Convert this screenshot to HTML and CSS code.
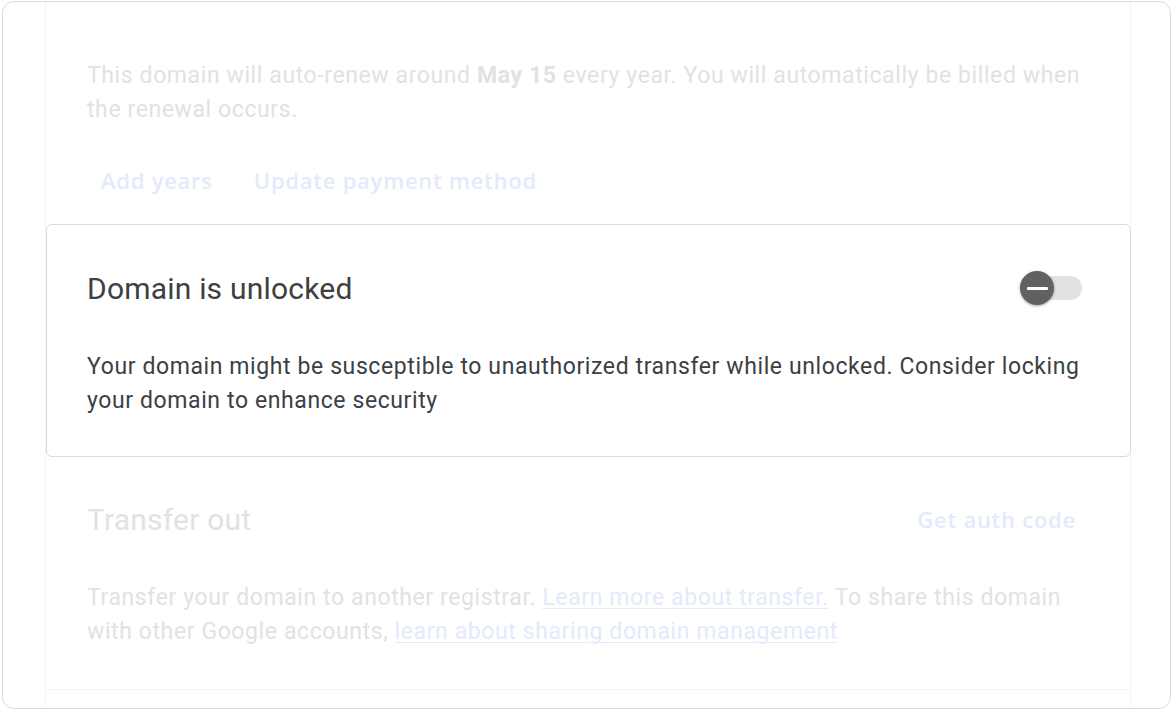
FILE: index.html
```html
<!DOCTYPE html>
<html lang="en">
<head>
<meta charset="utf-8">
<title>Domain settings</title>
<link rel="stylesheet" href="styles.css">
</head>
<body>
<div class="frame">
  <div class="column">
    <section class="renew">
      <p class="muted-text">This domain will auto-renew around <b>May 15</b> every year. You will automatically be billed when the renewal occurs.</p>
      <div class="actions">
        <span class="text-btn">Add years</span>
        <span class="text-btn">Update payment method</span>
      </div>
    </section>

    <section class="card">
      <div class="card-head">
        <h2 class="card-title">Domain is unlocked</h2>
        <div class="switch" role="switch" aria-checked="false">
          <span class="switch-track"></span>
          <span class="switch-knob"><span class="switch-minus"></span></span>
        </div>
      </div>
      <p class="card-text">Your domain might be susceptible to unauthorized transfer while unlocked. Consider locking your domain to enhance security</p>
    </section>

    <section class="transfer">
      <div class="transfer-head">
        <h2 class="muted-title">Transfer out</h2>
        <span class="text-btn">Get auth code</span>
      </div>
      <p class="muted-text">Transfer your domain to another registrar. <a class="muted-link" href="#">Learn more about transfer.</a> To share this domain with other Google accounts, <a class="muted-link" href="#">learn about sharing domain management</a></p>
    </section>
  </div>
</div>
</body>
</html>
```

FILE: styles.css
```css
* { box-sizing: border-box; }

html, body {
  margin: 0;
  padding: 0;
  background: #ffffff;
  font-family: Roboto, "Liberation Sans", Arial, sans-serif;
}

.frame {
  margin: 1px 3px 0 2px;
  height: 708px;
  border: 1px solid #d9d9d9;
  border-radius: 12px;
  overflow: hidden;
  background: #ffffff;
}

.column {
  margin-left: 42px;
  width: 1086px;
  height: 100%;
  border-left: 1px solid #f5f5f5;
  border-right: 1px solid #f5f5f5;
}

p { margin: 0; }

.muted-text {
  font-size: 23px;
  line-height: 34px;
  letter-spacing: 0.6px;
  color: #e2e2e2;
}

.muted-text b { font-weight: 700; }

.renew {
  padding: 57px 40px 0 41px;
}

.actions {
  display: flex;
  gap: 13px;
  margin-top: 29px;
}

.text-btn {
  display: inline-flex;
  align-items: center;
  height: 48px;
  padding: 0 14px;
  font-family: "Open Sans", Roboto, sans-serif;
  font-size: 22px;
  font-weight: 600;
  letter-spacing: 0.75px;
  color: #e3eafb;
}

.card {
  margin: 20px -1px 0 0;
  border: 1px solid #d9d9d9;
  border-radius: 6px;
  padding: 39px 40px 38px 40px;
  background: #ffffff;
}

.card-head {
  display: flex;
  align-items: center;
  justify-content: space-between;
  height: 48px;
}

.card-title {
  margin: 0;
  font-size: 30px;
  font-weight: 400;
  letter-spacing: 0.2px;
  color: #3c4043;
}

.switch {
  position: relative;
  width: 62px;
  height: 34px;
  margin-right: 8px;
}

.switch-track {
  position: absolute;
  left: 6px;
  top: 5px;
  width: 56px;
  height: 24px;
  border-radius: 12px;
  background: #e2e2e2;
}

.switch-knob {
  position: absolute;
  left: 0;
  top: 0;
  width: 34px;
  height: 34px;
  border-radius: 50%;
  background: #616161;
  box-shadow: 0 1px 3px rgba(0,0,0,0.35);
  display: flex;
  align-items: center;
  justify-content: center;
}

.switch-minus {
  width: 21px;
  height: 3px;
  background: #ffffff;
  border-radius: 1px;
}

.card-text {
  margin-top: 38px;
  font-size: 23px;
  line-height: 34px;
  letter-spacing: 0.6px;
  color: #3c4043;
}

.transfer {
  padding: 38px 40px 40px 41px;
  border-bottom: 1px solid #f5f5f5;
}

.transfer-head {
  display: flex;
  align-items: center;
  justify-content: space-between;
  height: 48px;
}

.muted-title {
  margin: 0;
  font-size: 30px;
  font-weight: 400;
  letter-spacing: 0.2px;
  color: #e2e2e2;
}

.transfer .muted-text { margin-top: 38px; }

.muted-link {
  color: #e3eafb;
  text-decoration: underline;
  text-decoration-thickness: 1px;
  text-underline-offset: 3px;
}
```
